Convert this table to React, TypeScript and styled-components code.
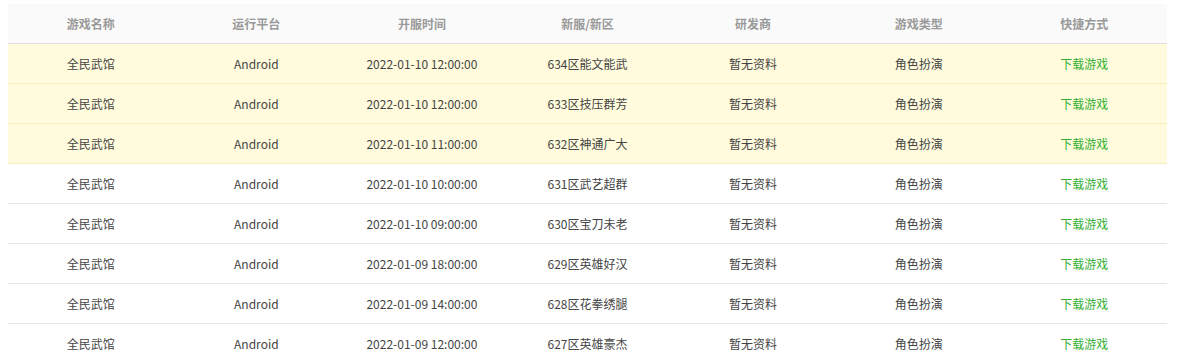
import { FunctionComponent } from 'react';
import styled, { createGlobalStyle } from 'styled-components';

const columns = ['游戏名称', '运行平台', '开服时间', '新服/新区', '研发商', '游戏类型', '快捷方式'];

const servers = [
    { time: '2022-01-10 12:00:00', zone: '634区能文能武', hot: true },
    { time: '2022-01-10 12:00:00', zone: '633区技压群芳', hot: true },
    { time: '2022-01-10 11:00:00', zone: '632区神通广大', hot: true },
    { time: '2022-01-10 10:00:00', zone: '631区武艺超群', hot: false },
    { time: '2022-01-10 09:00:00', zone: '630区宝刀未老', hot: false },
    { time: '2022-01-09 18:00:00', zone: '629区英雄好汉', hot: false },
    { time: '2022-01-09 14:00:00', zone: '628区花拳绣腿', hot: false },
    { time: '2022-01-09 12:00:00', zone: '627区英雄豪杰', hot: false },
];

const GlobalStyle = createGlobalStyle`
    body {
        margin: 0;
        background: #fff;
        font-family: "Noto Sans CJK SC", "Noto Sans", sans-serif;
    }
`;

const App: FunctionComponent = () => {
    return (
        <>
            <GlobalStyle />
            <SWrap>
                <STable>
                    <SHead>
                        {columns.map((c) => (
                            <SHeadCell key={c}>{c}</SHeadCell>
                        ))}
                    </SHead>
                    {servers.map((s) => (
                        <SRow key={s.zone} $hot={s.hot}>
                            <SCell>全民武馆</SCell>
                            <SCell>Android</SCell>
                            <SCell>{s.time}</SCell>
                            <SCell>{s.zone}</SCell>
                            <SCell>暂无资料</SCell>
                            <SCell>角色扮演</SCell>
                            <SCell>
                                <SLink href="#">下载游戏</SLink>
                            </SCell>
                        </SRow>
                    ))}
                </STable>
            </SWrap>
        </>
    );
};

export default App;

const SWrap = styled.div`
    padding: 4px 12px 0 8px;
`;

const STable = styled.div`
    display: flex;
    flex-direction: column;
`;

const SHead = styled.div`
    display: grid;
    grid-template-columns: repeat(7, 1fr);
    height: 39px;
    background: #fafafa;
    border-bottom: 1px solid #e2dede;
`;

const SHeadCell = styled.div`
    display: flex;
    align-items: center;
    justify-content: center;
    font-size: 12px;
    font-weight: bold;
    color: #999;
`;

const SRow = styled.div<{ $hot: boolean }>`
    display: grid;
    grid-template-columns: repeat(7, 1fr);
    height: 39px;
    background: ${(p) => (p.$hot ? '#fffbdc' : '#fff')};
    border-bottom: 1px solid ${(p) => (p.$hot ? '#f7edc2' : '#e6e6e6')};
`;

const SCell = styled.div`
    display: flex;
    align-items: center;
    justify-content: center;
    font-size: 12px;
    color: #444;
`;

const SLink = styled.a`
    color: #33b033;
    text-decoration: none;
`;
